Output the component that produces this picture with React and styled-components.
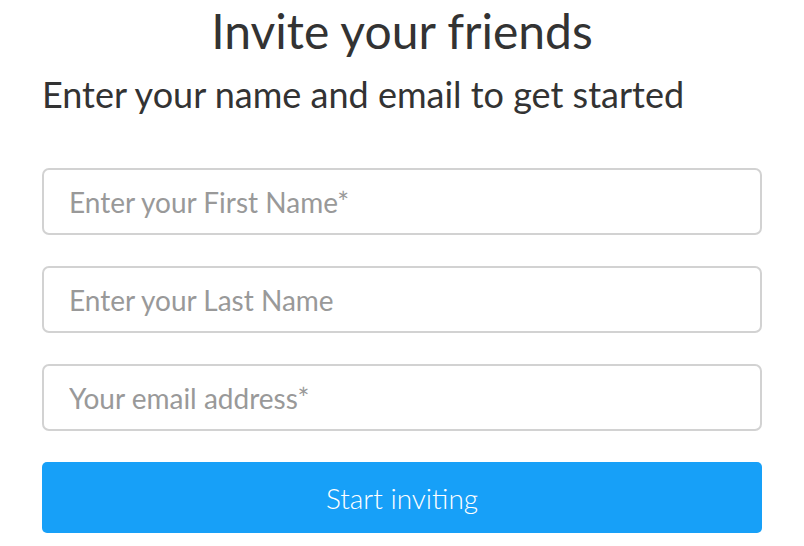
import styled, { createGlobalStyle } from "styled-components";

const GlobalStyle = createGlobalStyle`
  body {
    margin: 0;
    background: #fff;
    font-family: Lato, "Open Sans", sans-serif;
  }
`;

const Wrapper = styled.div`
  padding: 0 42px;
  display: flex;
  flex-direction: column;
`;

const Title = styled.h1`
  margin: 2px 0 0;
  font-weight: 400;
  font-size: 48px;
  line-height: 58px;
  color: #333;
  text-align: center;
`;

const Subtitle = styled.h2`
  margin: 12px 0 0;
  font-weight: 400;
  font-size: 36px;
  line-height: 44px;
  color: #333;
`;

const Form = styled.form`
  margin-top: 52px;
  display: flex;
  flex-direction: column;
  gap: 31px;
`;

const Input = styled.input`
  box-sizing: border-box;
  height: 67px;
  width: 100%;
  padding: 0 25px;
  border: 2px solid #d2d2d2;
  border-radius: 7px;
  font-family: inherit;
  font-size: 28px;
  color: #333;
  outline: none;

  &::placeholder {
    color: #999;
  }
`;

const Button = styled.button`
  height: 71px;
  border: none;
  border-radius: 5px;
  background: #17a0f8;
  color: #fff;
  font-family: inherit;
  font-weight: 300;
  font-size: 28px;
  cursor: pointer;
`;

function App() {
  return (
    <>
      <GlobalStyle />
      <Wrapper>
        <Title>Invite your friends</Title>
        <Subtitle>Enter your name and email to get started</Subtitle>
        <Form onSubmit={(e) => e.preventDefault()}>
          <Input placeholder="Enter your First Name*" />
          <Input placeholder="Enter your Last Name" />
          <Input placeholder="Your email address*" />
          <Button type="submit">Start inviting</Button>
        </Form>
      </Wrapper>
    </>
  );
}

export default App;
